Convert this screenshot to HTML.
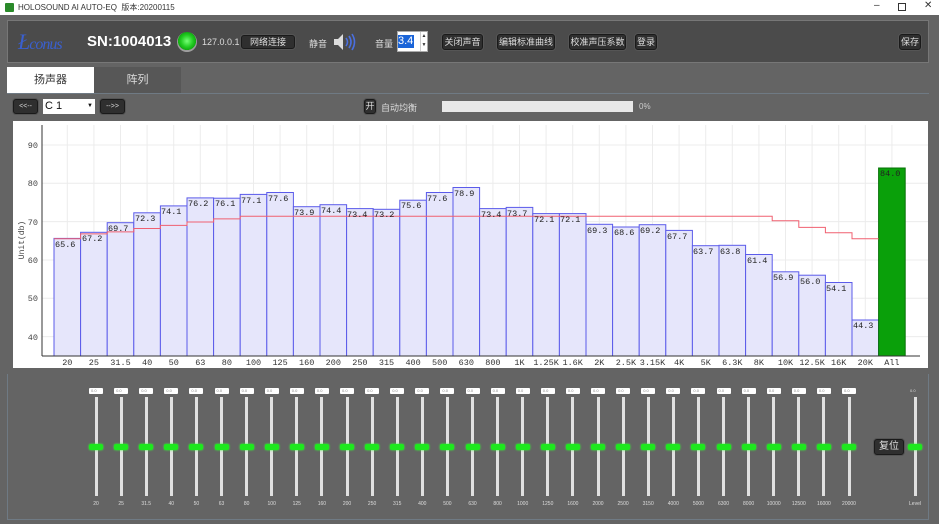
<!DOCTYPE html>
<html><head><meta charset="utf-8"><style>
*{margin:0;padding:0;box-sizing:border-box}
body{width:939px;height:524px;overflow:hidden;background:#646464;font-family:"Liberation Sans","Noto Sans CJK SC",sans-serif;position:relative}
.a{position:absolute}
.btn{position:absolute;background:#2f2f2f;border:1px solid #1a1a1a;border-radius:3px;color:#ddd;font-size:9px;text-align:center;line-height:13px;box-shadow:0 0 0 1px #555}
.s{position:absolute;top:388px;width:24px;margin-left:-12px;height:125px}
.s .v{position:absolute;left:5px;top:0;width:14px;height:6px;background:#fff;border-radius:1px;font-size:4px;line-height:6px;color:#888;padding-left:2px}
.s .t{position:absolute;left:10.5px;top:9px;width:3px;height:99px;background:#e0e0e0}
.s .h{position:absolute;left:5px;top:56px;width:14px;height:6px;background:#1ee81e;border-radius:2px;box-shadow:0 0 2px #3f3}
.s .l{position:absolute;left:-6px;width:36px;top:113px;font-size:5px;color:#ddd;text-align:center}
</style></head><body>
<!-- title bar -->
<div class="a" style="left:0;top:0;width:939px;height:15px;background:#fff"></div>
<div class="a" style="left:5px;top:3px;width:9px;height:9px;background:#2a8a2a;border-radius:1px"></div>
<div class="a" style="left:18px;top:2px;font-size:8px;color:#333">HOLOSOUND AI AUTO-EQ&nbsp; 版本:20200115</div>
<div class="a" style="left:874px;top:0;font-size:10px;color:#333">–</div>
<div class="a" style="left:898px;top:3px;width:8px;height:8px;border:1px solid #333"></div>
<div class="a" style="left:924px;top:0;font-size:10px;color:#333">✕</div>
<div class="a" style="left:0;top:15px;width:939px;height:509px;background:#646464"></div>
<!-- toolbar -->
<div class="a" style="left:7px;top:20px;width:922px;height:43px;background:#4b4b4b;border:1px solid #777"></div>
<div class="a" style="left:18px;top:29px;font-size:22px;font-style:italic;font-family:'Liberation Serif',serif;color:#3a5fcf;letter-spacing:-1px">Ł<span style="font-size:16px">conus</span></div>
<div class="a" style="left:87px;top:33px;font-size:15px;font-weight:bold;color:#fff">SN:1004013</div>
<div class="a" style="left:177px;top:32px;width:20px;height:20px;border-radius:50%;background:radial-gradient(circle at 50% 45%,#7f7 0,#2c2 40%,#1a1 60%,#999 62%,#bbb 100%)"></div>
<div class="a" style="left:202px;top:37px;font-size:9px;color:#ddd">127.0.0.1</div>
<div class="btn" style="left:241px;top:35px;width:54px;height:14px">网络连接</div>
<div class="a" style="left:309px;top:37px;font-size:9px;color:#ddd">静音</div>
<svg class="a" style="left:332px;top:32px" width="26" height="20"><polygon points="2,7 6,7 11,2 11,18 6,13 2,13" fill="#ddd"/><path d="M14,6 Q17,10 14,14 M17,4 Q21,10 17,16 M20,2 Q25,10 20,18" stroke="#4a6fe0" stroke-width="1.6" fill="none"/></svg>
<div class="a" style="left:375px;top:37px;font-size:9px;color:#ddd">音量</div>
<div class="a" style="left:397px;top:31px;width:31px;height:21px;background:#fff;border:1px solid #aaa"></div>
<div class="a" style="left:398px;top:35px;width:16px;height:13px;background:#1a64d8;color:#fff;font-size:11px;line-height:13px">3.4</div>
<div class="a" style="left:420px;top:32px;width:7px;height:19px;border-left:1px solid #ccc;font-size:5px;color:#333;text-align:center;line-height:9px">▲<br>▼</div>
<div class="btn" style="left:442px;top:34px;width:41px;height:16px;line-height:14px">关闭声音</div>
<div class="btn" style="left:497px;top:34px;width:58px;height:16px;line-height:14px">编辑标准曲线</div>
<div class="btn" style="left:569px;top:34px;width:57px;height:16px;line-height:14px">校准声压系数</div>
<div class="btn" style="left:635px;top:34px;width:22px;height:16px;line-height:14px">登录</div>
<div class="btn" style="left:899px;top:34px;width:22px;height:16px;line-height:14px">保存</div>
<!-- tabs -->
<div class="a" style="left:7px;top:67px;width:87px;height:26px;background:#fff;font-size:11px;color:#333;text-align:center;line-height:26px">扬声器</div>
<div class="a" style="left:94px;top:67px;width:87px;height:26px;background:#575757;font-size:11px;color:#ddd;text-align:center;line-height:26px">阵列</div>
<div class="a" style="left:7px;top:93px;width:922px;height:280px;background:#646464;border-top:1px solid #6f7a84"></div>
<!-- row -->
<div class="btn" style="left:13px;top:99px;width:25px;height:15px;font-size:7px;line-height:13px">&lt;&lt;--</div>
<div class="a" style="left:43px;top:99px;width:52px;height:15px;background:#fff;font-size:11px;line-height:15px;padding-left:2px;color:#111">C 1<span style="position:absolute;right:2px;font-size:6px">▼</span></div>
<div class="btn" style="left:100px;top:99px;width:25px;height:15px;font-size:7px;line-height:13px">--&gt;&gt;</div>
<div class="btn" style="left:364px;top:99px;width:12px;height:15px;font-size:9px;line-height:13px">开</div>
<div class="a" style="left:381px;top:101px;font-size:9px;color:#ddd">自动均衡</div>
<div class="a" style="left:442px;top:101px;width:191px;height:11px;background:#e8e8e8"></div>
<div class="a" style="left:639px;top:102px;font-size:8px;color:#ccc">0%</div>
<!-- chart -->
<svg class="a" style="left:0;top:0" width="939" height="380" font-family="Liberation Mono,monospace">
<rect x="13" y="121" width="915" height="247" fill="#fff"/>
<g stroke="#ececec" stroke-width="1">
<line x1="42" y1="145" x2="928" y2="145"/><line x1="42" y1="183.3" x2="928" y2="183.3"/><line x1="42" y1="221.6" x2="928" y2="221.6"/><line x1="42" y1="260" x2="928" y2="260"/><line x1="42" y1="298.3" x2="928" y2="298.3"/><line x1="42" y1="336.6" x2="928" y2="336.6"/>
<path d="M67.3,125V356M93.9,125V356M120.5,125V356M147.1,125V356M173.7,125V356M200.3,125V356M226.9,125V356M253.5,125V356M280.1,125V356M306.7,125V356M333.3,125V356M359.9,125V356M386.5,125V356M413.1,125V356M439.7,125V356M466.3,125V356M492.9,125V356M519.5,125V356M546.1,125V356M572.7,125V356M599.3,125V356M625.9,125V356M652.5,125V356M679.1,125V356M705.7,125V356M732.3,125V356M758.9,125V356M785.5,125V356M812.1,125V356M838.7,125V356M865.3,125V356M891.9,125V356"/>
</g>
<g fill="#e6e6fb" stroke="#5b5bea" stroke-width="1">
<rect x="54" y="238.4" width="26.6" height="117.6"/><rect x="80.6" y="232.3" width="26.6" height="123.7"/><rect x="107.2" y="222.7" width="26.6" height="133.3"/><rect x="133.8" y="212.8" width="26.6" height="143.2"/><rect x="160.4" y="205.9" width="26.6" height="150.1"/><rect x="187" y="197.9" width="26.6" height="158.1"/><rect x="213.6" y="198.2" width="26.6" height="157.8"/><rect x="240.2" y="194.4" width="26.6" height="161.6"/><rect x="266.8" y="192.5" width="26.6" height="163.5"/><rect x="293.4" y="206.7" width="26.6" height="149.3"/><rect x="320" y="204.7" width="26.6" height="151.3"/><rect x="346.6" y="208.6" width="26.6" height="147.4"/><rect x="373.2" y="209.3" width="26.6" height="146.7"/><rect x="399.8" y="200.2" width="26.6" height="155.8"/><rect x="426.4" y="192.5" width="26.6" height="163.5"/><rect x="453" y="187.5" width="26.6" height="168.5"/><rect x="479.6" y="208.6" width="26.6" height="147.4"/><rect x="506.2" y="207.4" width="26.6" height="148.6"/><rect x="532.8" y="213.6" width="26.6" height="142.4"/><rect x="559.4" y="213.6" width="26.6" height="142.4"/><rect x="586" y="224.3" width="26.6" height="131.7"/><rect x="612.6" y="227" width="26.6" height="129"/><rect x="639.2" y="224.7" width="26.6" height="131.3"/><rect x="665.8" y="230.4" width="26.6" height="125.6"/><rect x="692.4" y="245.7" width="26.6" height="110.3"/><rect x="719" y="245.3" width="26.6" height="110.7"/><rect x="745.6" y="254.5" width="26.6" height="101.5"/><rect x="772.2" y="271.8" width="26.6" height="84.2"/><rect x="798.8" y="275.2" width="26.6" height="80.8"/><rect x="825.4" y="282.5" width="26.6" height="73.5"/><rect x="852" y="320" width="26.6" height="36"/>
</g>
<rect x="878.6" y="168" width="26.6" height="188" fill="#0aa00a" stroke="#067006"/>
<polyline fill="none" stroke="#f06070" stroke-width="1" points="54,238.8 80.6,238.8 80.6,233.9 107.2,233.9 107.2,231.9 133.8,231.9 133.8,228.5 160.4,228.5 160.4,225.4 187,225.4 187,222 213.6,222 213.6,218.9 240.2,218.9 240.2,216.2 772.2,216.2 772.2,220.8 798.8,220.8 798.8,227.4 825.4,227.4 825.4,232.7 852,232.7 852,238.8 878.6,238.8"/>
<line x1="42" y1="125" x2="42" y2="356" stroke="#333"/>
<line x1="42" y1="356" x2="920" y2="356" stroke="#333"/>
<g font-size="8.5" fill="#444" text-anchor="end">
<text x="38" y="148">90</text><text x="38" y="186">80</text><text x="38" y="225">70</text><text x="38" y="263">60</text><text x="38" y="301">50</text><text x="38" y="340">40</text>
</g>
<text transform="translate(24,240) rotate(-90)" font-size="8" fill="#444" text-anchor="middle">Unit(db)</text>
<g font-size="8.5" fill="#222">
<text x="55" y="247">65.6</text><text x="82" y="241">67.2</text><text x="108" y="231">69.7</text><text x="135" y="221">72.3</text><text x="161" y="214">74.1</text><text x="188" y="206">76.2</text><text x="215" y="206">76.1</text><text x="241" y="203">77.1</text><text x="268" y="201">77.6</text><text x="294" y="215">73.9</text><text x="321" y="213">74.4</text><text x="347" y="217">73.4</text><text x="374" y="217">73.2</text><text x="401" y="208">75.6</text><text x="427" y="201">77.6</text><text x="454" y="196">78.9</text><text x="481" y="217">73.4</text><text x="507" y="216">73.7</text><text x="534" y="222">72.1</text><text x="560" y="222">72.1</text><text x="587" y="233">69.3</text><text x="614" y="235">68.6</text><text x="640" y="233">69.2</text><text x="667" y="239">67.7</text><text x="693" y="254">63.7</text><text x="720" y="254">63.8</text><text x="747" y="263">61.4</text><text x="773" y="280">56.9</text><text x="800" y="284">56.0</text><text x="826" y="291">54.1</text><text x="853" y="328">44.3</text><text x="880" y="176">84.0</text>
</g>
<g font-size="8.5" fill="#333" text-anchor="middle">
<text x="67.3" y="365">20</text><text x="93.9" y="365">25</text><text x="120.5" y="365">31.5</text><text x="147.1" y="365">40</text><text x="173.7" y="365">50</text><text x="200.3" y="365">63</text><text x="226.9" y="365">80</text><text x="253.5" y="365">100</text><text x="280.1" y="365">125</text><text x="306.7" y="365">160</text><text x="333.3" y="365">200</text><text x="359.9" y="365">250</text><text x="386.5" y="365">315</text><text x="413.1" y="365">400</text><text x="439.7" y="365">500</text><text x="466.3" y="365">630</text><text x="492.9" y="365">800</text><text x="519.5" y="365">1K</text><text x="546.1" y="365">1.25K</text><text x="572.7" y="365">1.6K</text><text x="599.3" y="365">2K</text><text x="625.9" y="365">2.5K</text><text x="652.5" y="365">3.15K</text><text x="679.1" y="365">4K</text><text x="705.7" y="365">5K</text><text x="732.3" y="365">6.3K</text><text x="758.9" y="365">8K</text><text x="785.5" y="365">10K</text><text x="812.1" y="365">12.5K</text><text x="838.7" y="365">16K</text><text x="865.3" y="365">20K</text><text x="891.9" y="365">All</text>
</g>
</svg>
<!-- sliders panel -->
<div class="a" style="left:7px;top:374px;width:922px;height:146px;border:1px solid #6f7a84;border-top:none"></div>
<div class="s" style="left:96px"><div class="v">0.0</div><div class="t"></div><div class="h"></div><div class="l">20</div></div>
<div class="s" style="left:121.1px"><div class="v">0.0</div><div class="t"></div><div class="h"></div><div class="l">25</div></div>
<div class="s" style="left:146.2px"><div class="v">0.0</div><div class="t"></div><div class="h"></div><div class="l">31.5</div></div>
<div class="s" style="left:171.3px"><div class="v">0.0</div><div class="t"></div><div class="h"></div><div class="l">40</div></div>
<div class="s" style="left:196.4px"><div class="v">0.0</div><div class="t"></div><div class="h"></div><div class="l">50</div></div>
<div class="s" style="left:221.5px"><div class="v">0.0</div><div class="t"></div><div class="h"></div><div class="l">63</div></div>
<div class="s" style="left:246.6px"><div class="v">0.0</div><div class="t"></div><div class="h"></div><div class="l">80</div></div>
<div class="s" style="left:271.7px"><div class="v">0.0</div><div class="t"></div><div class="h"></div><div class="l">100</div></div>
<div class="s" style="left:296.8px"><div class="v">0.0</div><div class="t"></div><div class="h"></div><div class="l">125</div></div>
<div class="s" style="left:321.9px"><div class="v">0.0</div><div class="t"></div><div class="h"></div><div class="l">160</div></div>
<div class="s" style="left:347px"><div class="v">0.0</div><div class="t"></div><div class="h"></div><div class="l">200</div></div>
<div class="s" style="left:372.1px"><div class="v">0.0</div><div class="t"></div><div class="h"></div><div class="l">250</div></div>
<div class="s" style="left:397.2px"><div class="v">0.0</div><div class="t"></div><div class="h"></div><div class="l">315</div></div>
<div class="s" style="left:422.3px"><div class="v">0.0</div><div class="t"></div><div class="h"></div><div class="l">400</div></div>
<div class="s" style="left:447.4px"><div class="v">0.0</div><div class="t"></div><div class="h"></div><div class="l">500</div></div>
<div class="s" style="left:472.5px"><div class="v">0.0</div><div class="t"></div><div class="h"></div><div class="l">630</div></div>
<div class="s" style="left:497.6px"><div class="v">0.0</div><div class="t"></div><div class="h"></div><div class="l">800</div></div>
<div class="s" style="left:522.7px"><div class="v">0.0</div><div class="t"></div><div class="h"></div><div class="l">1000</div></div>
<div class="s" style="left:547.8px"><div class="v">0.0</div><div class="t"></div><div class="h"></div><div class="l">1250</div></div>
<div class="s" style="left:572.9px"><div class="v">0.0</div><div class="t"></div><div class="h"></div><div class="l">1600</div></div>
<div class="s" style="left:598px"><div class="v">0.0</div><div class="t"></div><div class="h"></div><div class="l">2000</div></div>
<div class="s" style="left:623.1px"><div class="v">0.0</div><div class="t"></div><div class="h"></div><div class="l">2500</div></div>
<div class="s" style="left:648.2px"><div class="v">0.0</div><div class="t"></div><div class="h"></div><div class="l">3150</div></div>
<div class="s" style="left:673.3px"><div class="v">0.0</div><div class="t"></div><div class="h"></div><div class="l">4000</div></div>
<div class="s" style="left:698.4px"><div class="v">0.0</div><div class="t"></div><div class="h"></div><div class="l">5000</div></div>
<div class="s" style="left:723.5px"><div class="v">0.0</div><div class="t"></div><div class="h"></div><div class="l">6300</div></div>
<div class="s" style="left:748.6px"><div class="v">0.0</div><div class="t"></div><div class="h"></div><div class="l">8000</div></div>
<div class="s" style="left:773.7px"><div class="v">0.0</div><div class="t"></div><div class="h"></div><div class="l">10000</div></div>
<div class="s" style="left:798.8px"><div class="v">0.0</div><div class="t"></div><div class="h"></div><div class="l">12500</div></div>
<div class="s" style="left:823.9px"><div class="v">0.0</div><div class="t"></div><div class="h"></div><div class="l">16000</div></div>
<div class="s" style="left:849px"><div class="v">0.0</div><div class="t"></div><div class="h"></div><div class="l">20000</div></div>
<div class="s" style="left:915px"><div class="v" style="background:none;color:#ddd">0.0</div><div class="t"></div><div class="h"></div><div class="l">Level</div></div>
<div class="btn" style="left:874px;top:439px;width:30px;height:16px;font-size:10px;line-height:14px">复位</div>
</body></html>
